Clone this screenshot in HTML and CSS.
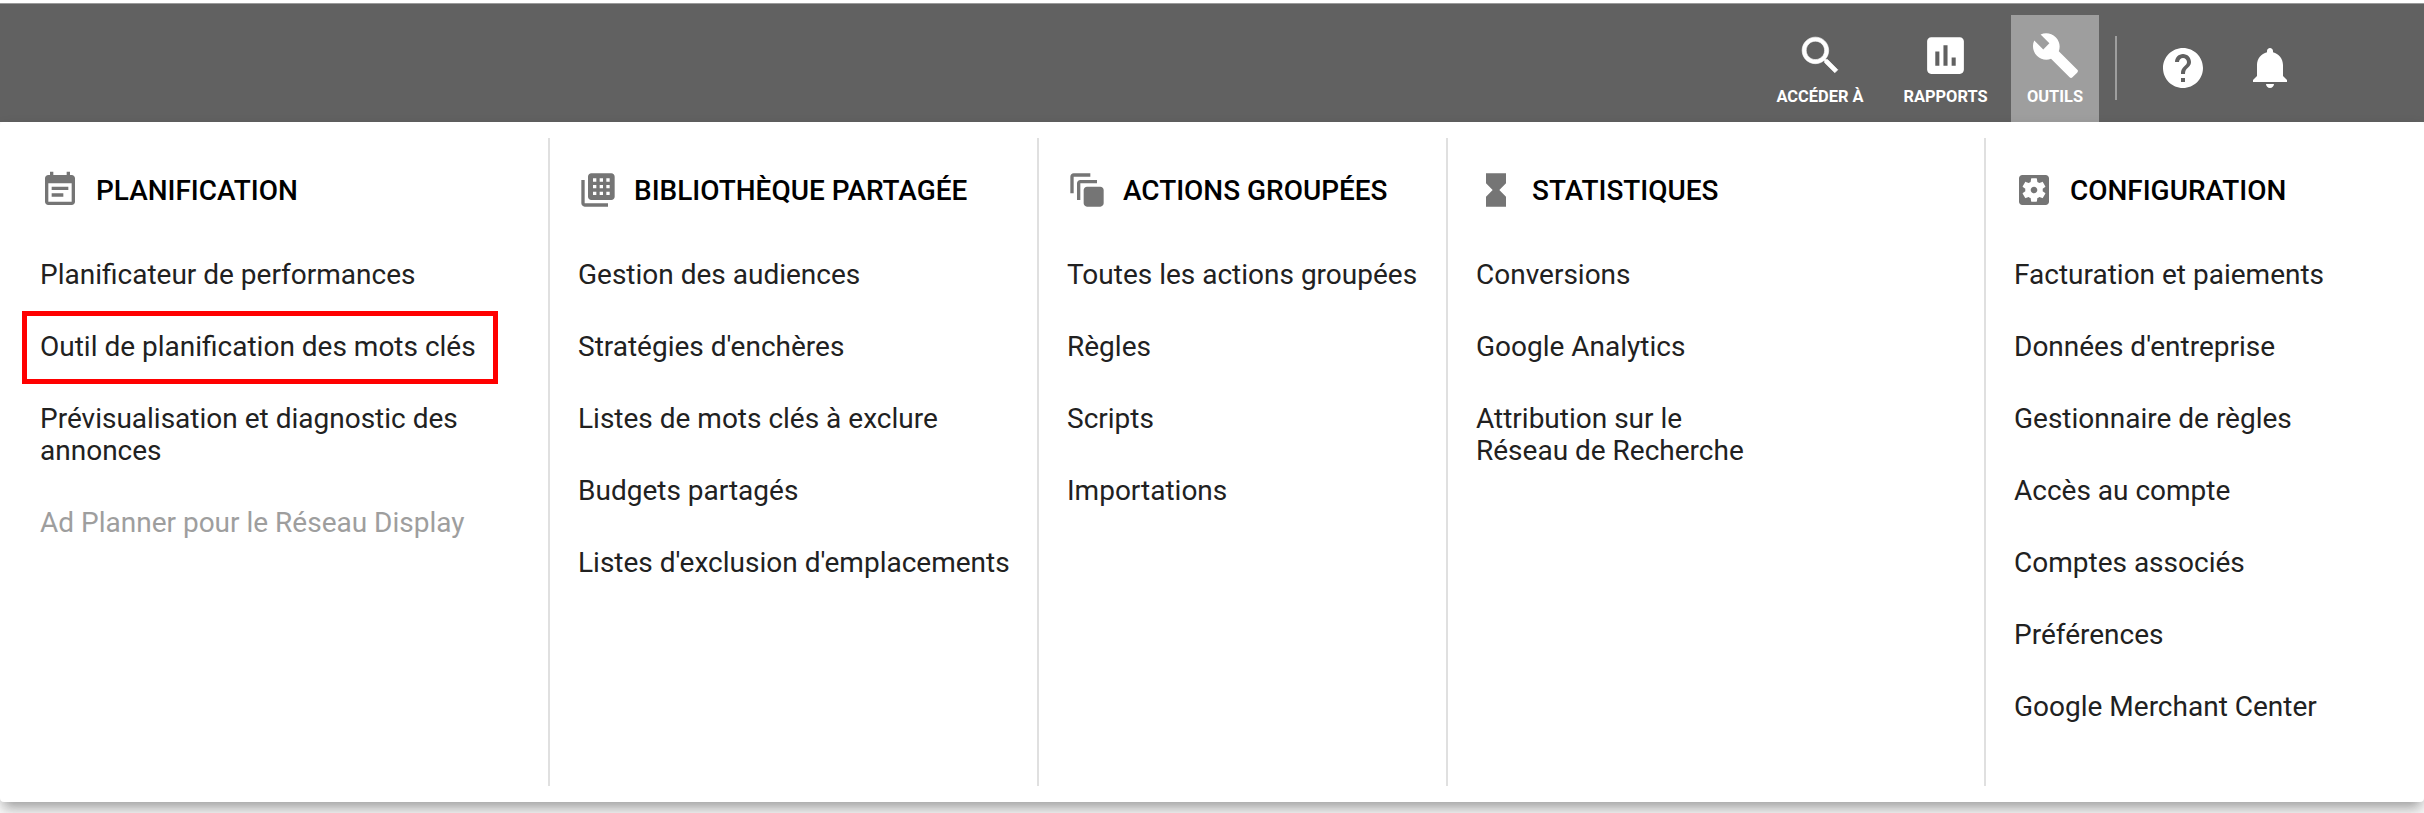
FILE: index.html
```html
<!DOCTYPE html>
<html lang="fr">
<head>
<meta charset="utf-8">
<title>Outils</title>
<link rel="stylesheet" href="styles.css">
</head>
<body>
<header class="topbar">
  <nav class="actions">
    <a class="action action-search">
      <svg class="action-icon" viewBox="0 0 24 24"><path d="M15.5 14h-.79l-.28-.27C15.41 12.59 16 11.11 16 9.5 16 5.91 13.09 3 9.5 3S3 5.91 3 9.5 5.91 16 9.5 16c1.61 0 3.09-.59 4.23-1.57l.27.28v.79l5 4.99L20.49 19l-4.99-5zm-6 0C7.01 14 5 11.99 5 9.5S7.01 5 9.5 5 14 7.01 14 9.5 11.99 14 9.5 14z"/></svg>
      <span>ACCÉDER À</span>
    </a>
    <a class="action action-reports">
      <svg class="action-icon" viewBox="0 0 24 24"><path d="M19 3H5c-1.100 0-2 .9-2 2v14c0 1.100.9 2 2 2h14c1.100 0 2-.9 2-2V5c0-1.100-.9-2-2-2zM9 17H7v-7h2v7zm4 0h-2V7h2v10zm4 0h-2v-4h2v4z"/></svg>
      <span>RAPPORTS</span>
    </a>
    <a class="action action-tools">
      <svg class="action-icon" viewBox="0 0 24 24"><path d="M22.7 19l-9.100-9.100c.9-2.300.4-5-1.500-6.900-2-2-5-2.400-7.400-1.300L9 6 6 9 1.600 4.700C.4 7.100.9 10.100 2.900 12.100c1.900 1.900 4.600 2.400 6.900 1.500l9.100 9.100c.4.4 1 .4 1.400 0l2.300-2.300c.5-.4.5-1.100.1-1.400z"/></svg>
      <span>OUTILS</span>
    </a>
  </nav>
  <div class="divider"></div>
  <div class="utilities">
    <svg class="utility-icon" viewBox="0 0 24 24"><path d="M12 2C6.480 2 2 6.480 2 12s4.480 10 10 10 10-4.480 10-10S17.520 2 12 2zm1 17h-2v-2h2v2zm2.070-7.750l-.9.920C13.450 12.900 13 13.500 13 15h-2v-.5c0-1.100.45-2.100 1.170-2.830l1.240-1.260c.37-.36.59-.86.59-1.410 0-1.100-.9-2-2-2s-2 .9-2 2H8c0-2.210 1.790-4 4-4s4 1.790 4 4c0 .88-.36 1.680-.93 2.250z"/></svg>
    <svg class="utility-icon" viewBox="0 0 24 24"><path d="M11.500 22c1.100 0 2-.9 2-2h-4c0 1.100.9 2 2 2zm6.500-6v-5.500c0-3.070-2.130-5.640-5-6.320V3.500c0-.83-.67-1.500-1.500-1.500S10 2.670 10 3.500v.68c-2.870.68-5 3.250-5 6.320V16l-2 2v1h17v-1l-2-2z"/></svg>
  </div>
</header>
<main class="menu">
  <section class="column">
    <h2 class="heading">
      <svg class="heading-icon" viewBox="0 0 24 24"><path d="M17 10H7v2h10v-2zm2-7h-1V1h-2v2H8V1H6v2H5c-1.110 0-1.990.9-1.990 2L3 19c0 1.100.89 2 2 2h14c1.100 0 2-.9 2-2V5c0-1.100-.9-2-2-2zm0 16H5V8h14v11zm-5-5H7v2h7v-2z"/></svg>
      <span class="heading-text">PLANIFICATION</span>
    </h2>
    <ul class="links">
      <li>Planificateur de performances</li>
      <li class="highlighted">Outil de planification des mots clés</li>
      <li>Prévisualisation et diagnostic des<br>annonces</li>
      <li class="disabled">Ad Planner pour le Réseau Display</li>
    </ul>
  </section>
  <section class="column">
    <h2 class="heading">
      <svg class="heading-icon" viewBox="0 0 24 24"><path fill-rule="evenodd" d="M4 6H2v14c0 1.100.9 2 2 2h14v-2H4V6zM20 2H8c-1.100 0-2 .9-2 2v12c0 1.100.9 2 2 2h12c1.100 0 2-.9 2-2V4c0-1.100-.9-2-2-2zM9 5h2v2H9zM13 5h2v2h-2zM17 5h2v2h-2zM9 9h2v2H9zM13 9h2v2h-2zM17 9h2v2h-2zM9 13h2v2H9zM13 13h2v2h-2zM17 13h2v2h-2z"/></svg>
      <span class="heading-text">BIBLIOTHÈQUE PARTAGÉE</span>
    </h2>
    <ul class="links">
      <li>Gestion des audiences</li>
      <li>Stratégies d'enchères</li>
      <li>Listes de mots clés à exclure</li>
      <li>Budgets partagés</li>
      <li>Listes d'exclusion d'emplacements</li>
    </ul>
  </section>
  <section class="column">
    <h2 class="heading">
      <svg class="heading-icon" viewBox="0 0 24 24"><path d="M2 14h2V4h10V2H4c-1.100 0-2 .9-2 2zM6 18h2V8h10V6H8c-1.100 0-2 .9-2 2zM12 10h8c1.100 0 2 .9 2 2v8c0 1.100-.9 2-2 2h-8c-1.100 0-2-.9-2-2v-8c0-1.100.9-2 2-2z"/></svg>
      <span class="heading-text">ACTIONS GROUPÉES</span>
    </h2>
    <ul class="links">
      <li>Toutes les actions groupées</li>
      <li>Règles</li>
      <li>Scripts</li>
      <li>Importations</li>
    </ul>
  </section>
  <section class="column">
    <h2 class="heading">
      <svg class="heading-icon" viewBox="0 0 24 24"><path d="M6 2v6h.01L6 8.010 10 12l-4 4 .01.01H6V22h12v-5.990h-.01L18 16l-4-4 4-3.990-.01-.01H18V2H6z"/></svg>
      <span class="heading-text">STATISTIQUES</span>
    </h2>
    <ul class="links">
      <li>Conversions</li>
      <li>Google Analytics</li>
      <li>Attribution sur le<br>Réseau de Recherche</li>
    </ul>
  </section>
  <section class="column">
    <h2 class="heading">
      <svg class="heading-icon" viewBox="0 0 24 24"><path d="M12 10c-1.100 0-2 .9-2 2s.9 2 2 2 2-.9 2-2-.9-2-2-2zm7-7H5c-1.110 0-2 .9-2 2v14c0 1.100.89 2 2 2h14c1.110 0 2-.9 2-2V5c0-1.100-.89-2-2-2zm-1.750 9c0 .23-.02.46-.05.68l1.480 1.160c.13.11.17.3.08.45l-1.400 2.420c-.09.15-.27.21-.43.15l-1.740-.7c-.36.28-.76.51-1.180.69l-.26 1.850c-.03.17-.18.3-.35.3h-2.800c-.17 0-.32-.13-.35-.29l-.26-1.850c-.43-.18-.82-.41-1.180-.69l-1.740.7c-.16.06-.34 0-.43-.15l-1.400-2.420c-.09-.15-.05-.34.08-.45l1.480-1.160c-.03-.23-.05-.46-.05-.69 0-.23.02-.46.05-.68l-1.480-1.160c-.13-.11-.17-.3-.08-.45l1.400-2.420c.09-.15.27-.21.43-.15l1.740.7c.36-.28.76-.51 1.180-.69l.26-1.850c.03-.17.18-.3.35-.3h2.800c.17 0 .32.13.35.29l.26 1.850c.43.18.82.41 1.180.69l1.740-.7c.16-.06.34 0 .43.15l1.400 2.420c.09.15.05.34-.08.45l-1.480 1.160c.03.23.05.46.05.69z"/></svg>
      <span class="heading-text">CONFIGURATION</span>
    </h2>
    <ul class="links">
      <li>Facturation et paiements</li>
      <li>Données d'entreprise</li>
      <li>Gestionnaire de règles</li>
      <li>Accès au compte</li>
      <li>Comptes associés</li>
      <li>Préférences</li>
      <li>Google Merchant Center</li>
    </ul>
  </section>
</main>
</body>
</html>
```
FILE: styles.css
```css
* {
  box-sizing: border-box;
}

body {
  margin: 0;
  height: 813px;
  overflow: hidden;
  background: #fff;
  font-family: Roboto, "Liberation Sans", sans-serif;
  color: #212121;
}

svg {
  display: block;
  flex: none;
  fill: currentColor;
}

.topbar {
  display: flex;
  justify-content: flex-end;
  height: 122px;
  padding-right: 129px;
  border-top: 3px solid #fff;
  background: #616161;
  box-shadow: inset 0 1px #9a9a9a;
  color: #fff;
}

.actions {
  display: flex;
  gap: 7px;
  padding-top: 12px;
}

.action {
  display: flex;
  flex-direction: column;
  align-items: center;
  padding-top: 16px;
  font-size: 16.4px;
  font-weight: 700;
  line-height: 20px;
  white-space: nowrap;
}

.action-icon {
  width: 49px;
  height: 49px;
  margin-bottom: 7px;
}

.action-search {
  width: 120px;
}

.action-search .action-icon {
  stroke: currentColor;
  stroke-width: .3;
}

.action-reports {
  width: 117px;
}

.action-tools {
  width: 88px;
  background: #9e9e9e;
}

.divider {
  width: 2px;
  height: 64px;
  margin: 33px 42px 0 16px;
  background: #9e9e9e;
}

.utilities {
  display: flex;
  gap: 40px;
  padding-top: 41px;
}

.utility-icon {
  width: 48px;
  height: 48px;
}

.menu {
  position: relative;
  display: grid;
  grid-template-columns: 550px 489px 409px 538px 1fr;
  height: 680px;
  padding: 16px 0;
  border-radius: 4px;
  background: #fff;
  box-shadow: 0 10px 10px -6px rgba(0, 0, 0, .2), 0 16px 20px 2px rgba(0, 0, 0, .07), 0 6px 14px 0 rgba(0, 0, 0, .16);
}

.column {
  padding: 32px 0 0 28px;
  border-right: 2px solid #e0e0e0;
}

.column:first-child {
  padding-left: 40px;
}

.column:last-child {
  border-right: 0;
}

.heading {
  display: flex;
  align-items: center;
  gap: 16px;
  height: 40px;
  margin: 0 0 49px;
  color: #000;
  font-size: 27.950px;
  font-weight: 500;
  line-height: 32px;
  white-space: nowrap;
}

.heading-text {
  padding-top: 1px;
}

.heading-icon {
  width: 40px;
  height: 40px;
  color: #757575;
}

.links {
  display: flex;
  flex-direction: column;
  gap: 40px;
  margin: 0;
  padding: 0;
  list-style: none;
  font-size: 28px;
  line-height: 32px;
  white-space: nowrap;
}

.highlighted {
  width: 476px;
  margin: -20px 0 -21px -18px;
  padding: 15px 13px 16px;
  border: 5px solid #f00;
}

.disabled {
  color: #9e9e9e;
}
```
